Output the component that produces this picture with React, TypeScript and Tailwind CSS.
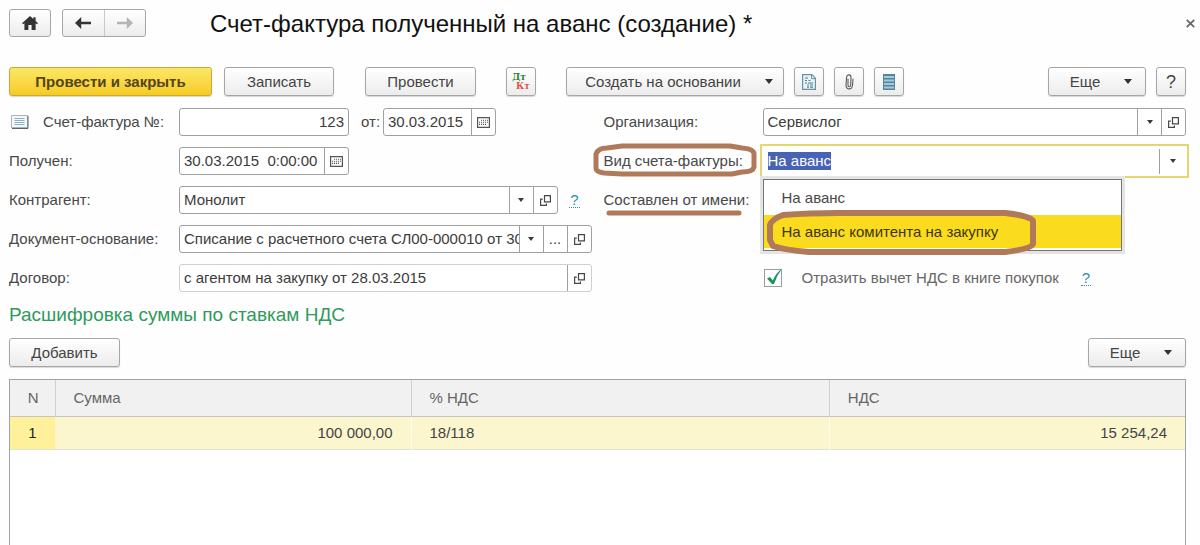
import React, { useEffect, useRef } from "react";

const BUTTON =
  "flex h-[29px] shrink-0 items-center justify-center rounded-[3px] border border-[#a6a6a6] bg-linear-to-b from-white to-[#ececec] text-[#444] shadow-[0_1px_1px_#d8d8d8]";
const FIELD = "flex h-7 min-w-0 rounded-[3px] border bg-white";
const INPUT = "min-w-0 flex-1 bg-transparent pl-1 text-[#3c3c3c] outline-none";
const SIDE = "flex w-6 shrink-0 items-center justify-center border-l border-[#a0a0a0] text-[#444]";

function Caret({ small = false }: { small?: boolean }) {
  return small ? (
    <svg width="6" height="4" viewBox="0 0 6 4" aria-hidden="true">
      <path d="M0 0h6L3 4z" fill="#3a3a3a" />
    </svg>
  ) : (
    <svg width="8" height="5" viewBox="0 0 8 5" aria-hidden="true">
      <path d="M0 0h8L4 5z" fill="#333" />
    </svg>
  );
}

function OpenIcon() {
  return (
    <svg width="11" height="11" viewBox="0 0 11 11" fill="none" stroke="#484848" strokeWidth="1.2" aria-hidden="true">
      <path d="M4.5 .6h5.9v6.3H4.5z" />
      <path d="M2.8 4.1H.6v6.3h5.8V8.6" />
    </svg>
  );
}

function CalendarIcon() {
  return (
    <svg width="13" height="11" viewBox="0 0 13 11" fill="none" aria-hidden="true">
      <path d="M.6.6h11.8v9.8H.6z" stroke="#555" strokeWidth="1.2" />
      <path d="M4 3.2h7M2 5.3h9M2 7.4h7" stroke="#555" strokeWidth="1.1" strokeDasharray="1.1 .9" />
    </svg>
  );
}

function SelectButton({ label }: { label: string }) {
  return (
    <button type="button" aria-label={label} className={SIDE}>
      <Caret small />
    </button>
  );
}

function OpenButton({ label }: { label: string }) {
  return (
    <button type="button" aria-label={label} className={SIDE}>
      <OpenIcon />
    </button>
  );
}

function HelpLink({ label }: { label: string }) {
  return (
    <a href="#help" aria-label={label} className="border-b border-dotted border-[#2f8fb0] px-px leading-[15px] text-[#2f8fb0]">
      ?
    </a>
  );
}

function MoreButton() {
  return (
    <button type="button" className={`${BUTTON} w-[98px] gap-6 pl-2`}>
      Еще
      <Caret />
    </button>
  );
}

function TitleBar() {
  return (
    <header className="flex h-7 items-center">
      <button
        type="button"
        aria-label="Начальная страница"
        className="flex h-7 w-[42px] items-center justify-center rounded-[3px] border border-[#a6a6a6] bg-linear-to-b from-white to-[#ececec]"
      >
        <svg width="16" height="14" viewBox="0 0 16 14" fill="#333" aria-hidden="true">
          <path d="M8 0 0 7.2l1.1 1.1L2.4 7.200V14h4V9h3.200v5h4V7.200l1.300 1.100L16 7.200l-2.400-2.200V1.200h-2.200v1.900z" />
        </svg>
      </button>
      <div className="ml-[11px] flex h-7 w-[84px] rounded-[3px] border border-[#a6a6a6] bg-linear-to-b from-white to-[#ececec]">
        <button type="button" aria-label="Назад" className="flex flex-1 items-center justify-center border-r border-[#c8c8c8]">
          <svg width="16" height="12" viewBox="0 0 16 12" fill="#333" aria-hidden="true">
            <path d="M0 6 6.200 0v4.700H16v2.600H6.200V12z" />
          </svg>
        </button>
        <button type="button" aria-label="Вперед" className="flex flex-1 items-center justify-center">
          <svg width="16" height="12" viewBox="0 0 16 12" fill="#b4b4b4" aria-hidden="true">
            <path d="M16 6 9.800 0v4.700H0v2.600h9.800V12z" />
          </svg>
        </button>
      </div>
      <h1 className="ml-16 flex-1 pt-px text-2xl leading-7 whitespace-nowrap text-[#111]">
        Счет-фактура полученный на аванс (создание) *
      </h1>
      <button type="button" aria-label="Закрыть" className="-mr-3 p-[3px]">
        <svg width="9" height="9" viewBox="0 0 9 9" stroke="#666" strokeWidth="1.700" aria-hidden="true">
          <path d="M.8.8l7.400 7.400M8.200.8.8 8.200" />
        </svg>
      </button>
    </header>
  );
}

function Toolbar() {
  return (
    <div className="mt-[30px] flex items-center whitespace-nowrap">
      <button
        type="button"
        className="flex h-[29px] w-[203px] items-center justify-center rounded-[3px] border border-[#c9a93c] bg-linear-to-b from-[#fbe765] to-[#f7cb1c] font-bold text-[#54451a] shadow-[0_1px_1px_#d8d8d8]"
      >
        Провести и закрыть
      </button>
      <button type="button" className={`${BUTTON} ml-3 w-[110px]`}>
        Записать
      </button>
      <button type="button" className={`${BUTTON} ml-[31px] w-[111px]`}>
        Провести
      </button>
      <button
        type="button"
        aria-label="Дт Кт"
        className={`${BUTTON} ml-[30px] w-[30px] flex-col font-['DejaVu_Serif',serif] text-[9px] leading-[9px] font-bold`}
      >
        <span className="mr-1 text-[#25832f]">Дт</span>
        <span className="ml-1 text-[#e05548]">Кт</span>
      </button>
      <button type="button" className={`${BUTTON} ml-[30px] w-[218px] gap-6 pl-2`}>
        Создать на основании
        <Caret />
      </button>
      <button type="button" aria-label="Отчеты" className={`${BUTTON} ml-[10px] w-[30px]`}>
        <svg width="14" height="16" viewBox="0 0 14 16" fill="none" aria-hidden="true">
          <path d="M.6.6h9.200l3.600 3.600v11.200H.6z" fill="#e9f2f7" stroke="#6a93a8" strokeWidth="1.200" />
          <path d="M9.500.6v4h4" stroke="#6a93a8" />
          <path d="M3 4h3M3 6.500h2M6.500 6.500h2M3 9h2M6 9h5M5 11h2M8 11h3M5 13.200h2M8 13.200h3" stroke="#557f96" strokeWidth="1.200" />
        </svg>
      </button>
      <button type="button" aria-label="Присоединенные файлы" className={`${BUTTON} ml-[10px] w-[30px]`}>
        <svg width="9" height="16" viewBox="0 0 9 16" fill="none" stroke="#5a5a5a" strokeWidth="1.100" strokeLinecap="round" aria-hidden="true">
          <path d="M3 5v6.200c0 2 2.600 2 2.700 0L6 3.400C6 .2 2.200 0 1.600 3L1 10.800c-.2 5.400 6 5.400 6.500.4L8 5" />
        </svg>
      </button>
      <button type="button" aria-label="Реестр" className={`${BUTTON} ml-[10px] w-[30px]`}>
        <svg width="12" height="16" viewBox="0 0 12 16" aria-hidden="true">
          <path d="M0 0h12v16H0z" fill="#55859d" />
          <path d="M1 2h10v2H1zM1 5.500h10v2H1zM1 9h10v2H1zM1 12.500h10v2H1z" fill="#a5cadb" />
        </svg>
      </button>
      <div className="ml-auto flex gap-[10px]">
        <MoreButton />
        <button type="button" aria-label="Справка" className={`${BUTTON} w-[30px] text-[18px] text-[#222]`}>
          ?
        </button>
      </div>
    </div>
  );
}

function LeftColumn() {
  const label = "w-[170px] shrink-0 whitespace-nowrap";
  return (
    <div className="flex min-w-0 flex-col gap-[11px]">
      <div className="flex h-7 items-center">
        <div className="flex w-[170px] shrink-0 items-center whitespace-nowrap">
          <svg className="ml-[2px]" width="18" height="14" viewBox="0 0 18 14" fill="none" aria-hidden="true">
            <path d="M.5.5h16v12H.5z" fill="#f3f8fa" stroke="#a9b4ba" />
            <path d="M17 1v12.500H1" stroke="#59666c" />
            <path d="M3.500 3.500h10M3.500 5.500h10M3.500 7.500h10M3.500 9.500h10" stroke="#8fb2c2" />
          </svg>
          <label htmlFor="number" className="ml-[14px]">
            Счет-фактура №:
          </label>
        </div>
        <div className={`${FIELD} w-[170px] border-[#a0a0a0]`}>
          <input id="number" defaultValue="123" className={`${INPUT} pr-1 text-right`} />
        </div>
        <label htmlFor="date" className="ml-3 w-[22px]">
          от:
        </label>
        <div className={`${FIELD} w-[113px] border-[#a0a0a0]`}>
          <input id="date" defaultValue="30.03.2015" className={INPUT} />
          <button type="button" aria-label="Выбрать дату" className={SIDE}>
            <CalendarIcon />
          </button>
        </div>
      </div>
      <div className="flex h-7 items-center">
        <label htmlFor="received" className={label}>
          Получен:
        </label>
        <div className={`${FIELD} w-[170px] border-[#a0a0a0]`}>
          <input id="received" defaultValue="30.03.2015  0:00:00" className={`${INPUT} whitespace-pre`} />
          <button type="button" aria-label="Выбрать дату получения" className={SIDE}>
            <CalendarIcon />
          </button>
        </div>
      </div>
      <div className="flex h-7 items-center">
        <label htmlFor="partner" className={label}>
          Контрагент:
        </label>
        <div className={`${FIELD} flex-1 border-[#a0a0a0]`}>
          <input id="partner" defaultValue="Монолит" className={INPUT} />
          <SelectButton label="Выбрать контрагента" />
          <OpenButton label="Открыть контрагента" />
        </div>
        <div className="flex w-[34px] justify-center">
          <HelpLink label="Справка по контрагенту" />
        </div>
      </div>
      <div className="flex h-7 items-center">
        <label htmlFor="basis" className={label}>
          Документ-основание:
        </label>
        <div className={`${FIELD} flex-1 border-[#a0a0a0]`}>
          <input id="basis" defaultValue="Списание с расчетного счета СЛ00-000010 от 30." className={INPUT} />
          <SelectButton label="Выбрать основание" />
          <button type="button" aria-label="Подобрать основание" className={SIDE}>
            ...
          </button>
          <OpenButton label="Открыть основание" />
        </div>
      </div>
      <div className="flex h-7 items-center">
        <label htmlFor="contract" className={label}>
          Договор:
        </label>
        <div className={`${FIELD} flex-1 border-[#cfcfcf]`}>
          <input id="contract" defaultValue="с агентом на закупку от 28.03.2015" className={INPUT} />
          <OpenButton label="Открыть договор" />
        </div>
      </div>
    </div>
  );
}

function KindField() {
  const input = useRef<HTMLInputElement>(null);
  useEffect(() => {
    input.current?.focus();
    input.current?.select();
  }, []);
  return (
    <div className="relative flex h-7 min-w-0 flex-1 items-center bg-white outline-2 outline-offset-1 outline-[#e6d66e]">
      <input
        id="kind"
        ref={input}
        role="combobox"
        aria-expanded="true"
        aria-controls="kind-list"
        defaultValue="На аванс"
        className="ml-[5px] h-[18px] min-w-0 flex-1 bg-transparent leading-[18px] outline-none selection:bg-[#4863b6] selection:text-white"
      />
      <button type="button" aria-label="Выбрать вид" className="flex h-[25px] w-[27px] items-center justify-center border-l border-[#a0a0a0]">
        <Caret small />
      </button>
      <ul
        id="kind-list"
        role="listbox"
        aria-label="Вид счета-фактуры"
        className="absolute top-full right-16 left-0 z-10 mt-1 border border-[#757575] bg-white pb-[2px] shadow-[0_0_0_3px_#e4e4e4]"
      >
        <li role="option" aria-selected="false" className="flex h-[35px] items-center pl-[18px]">
          На аванс
        </li>
        <li role="option" aria-selected="true" className="relative flex h-[33px] items-center bg-[#fadb1e] pl-[18px] text-[#3d3510]">
          На аванс комитента на закупку
          <svg className="absolute -top-[5px] left-[3px]" width="270" height="46" viewBox="0 0 270 46" fill="none" aria-hidden="true">
            <path
              d="M16 5Q42 3 72 3H238Q265 6 266 11V34Q264 39 238 42H42Q17 40 6 36L3 30V15Q5 9 16 5Z"
              stroke="#b07a5a"
              strokeWidth="6"
              strokeLinejoin="round"
            />
          </svg>
        </li>
      </ul>
    </div>
  );
}

function RightColumn() {
  return (
    <div className="flex min-w-0 flex-col gap-[11px]">
      <div className="flex h-7 items-center">
        <label htmlFor="company" className="w-[159px] shrink-0">
          Организация:
        </label>
        <div className={`${FIELD} flex-1 border-[#a0a0a0]`}>
          <input id="company" defaultValue="Сервислог" className={INPUT} />
          <SelectButton label="Выбрать организацию" />
          <OpenButton label="Открыть организацию" />
        </div>
      </div>
      <div className="flex h-7 items-center">
        <div className="relative w-[159px] shrink-0 whitespace-nowrap">
          <label htmlFor="kind">Вид счета-фактуры:</label>
          <svg className="absolute -top-2 -left-3" width="166" height="36" viewBox="0 0 166 36" fill="none" aria-hidden="true">
            <path
              d="M15 5L30 3H138L150 5Q162 6 162 11V24Q161 29 150 29L140 31H30L12 30Q4 29 4 25V11Q6 5 15 5Z"
              stroke="#b07a5a"
              strokeWidth="5"
              strokeLinejoin="round"
            />
          </svg>
        </div>
        <KindField />
      </div>
      <div className="flex h-7 items-center">
        <div className="relative whitespace-nowrap">
          Составлен от имени:
          <svg className="absolute -bottom-[7px] left-0" width="140" height="8" viewBox="0 0 140 8" aria-hidden="true">
            <path d="M5 4H135" stroke="#b07a5a" strokeWidth="5" strokeLinecap="round" />
          </svg>
        </div>
      </div>
      <div className="h-7" />
      <div className="flex h-7 items-center pl-[160px] whitespace-nowrap">
        <span className="relative flex">
          <input
            id="deduct"
            type="checkbox"
            defaultChecked
            className="peer size-[18px] appearance-none border border-[#9c9c9c] bg-white"
          />
          <svg
            className="pointer-events-none absolute bottom-0 left-0 hidden peer-checked:block"
            width="20"
            height="20"
            viewBox="0 0 20 20"
            aria-hidden="true"
          >
            <path d="M3 11.500 6 10l2.800 3.600Q12 6 18 1.500Q12.500 9 10 17H8z" fill="#14955a" />
          </svg>
        </span>
        <label htmlFor="deduct" className="ml-5 text-[#666]">
          Отразить вычет НДС в книге покупок
        </label>
        <div className="ml-[22px] flex">
          <HelpLink label="Справка по вычету НДС" />
        </div>
      </div>
    </div>
  );
}

function RatesTable() {
  return (
    <div className="mt-3 flex-1 border border-b-0 border-[#a3a3a3] bg-white">
      <table className="w-full table-fixed border-collapse text-left">
        <thead>
          <tr className="h-9 border-b border-[#c4c4c4] bg-[#f1f1f1] text-[#666]">
            <th className="w-[45px] border-r border-[#cfcfcf] pl-[2px] text-center font-normal">N</th>
            <th className="w-[30.3%] border-r border-[#cfcfcf] pl-[18px] font-normal">Сумма</th>
            <th className="w-[35.6%] border-r border-[#cfcfcf] pl-[18px] font-normal">% НДС</th>
            <th className="pl-[18px] font-normal">НДС</th>
          </tr>
        </thead>
        <tbody>
          <tr className="h-[33px] border-b border-[#e4e2d2] bg-[#fcf6cf] text-[#444]">
            <td className="bg-[#fff09c] text-center text-[#222]">1</td>
            <td className="border-r border-[#fffdf0] pr-[18px] text-right">100 000,00</td>
            <td className="border-r border-[#fffdf0] pl-[18px]">18/118</td>
            <td className="pr-[18px] text-right">15 254,24</td>
          </tr>
        </tbody>
      </table>
    </div>
  );
}

export default function App() {
  return (
    <main className="flex min-h-screen flex-col overflow-x-hidden bg-[#fefefe] pt-[9px] pr-[14px] pl-[9px] font-['Liberation_Sans',Arial,sans-serif] text-[15px] leading-5 text-[#484848]">
      <TitleBar />
      <Toolbar />
      <form className="mt-3 grid grid-cols-2 gap-3">
        <LeftColumn />
        <RightColumn />
      </form>
      <h2 className="mt-[10px] text-[19px] leading-[26px] text-[#2f9a5c]">Расшифровка суммы по ставкам НДС</h2>
      <div className="mt-[10px] flex justify-between">
        <button type="button" className={`${BUTTON} w-[111px]`}>
          Добавить
        </button>
        <MoreButton />
      </div>
      <RatesTable />
    </main>
  );
}
